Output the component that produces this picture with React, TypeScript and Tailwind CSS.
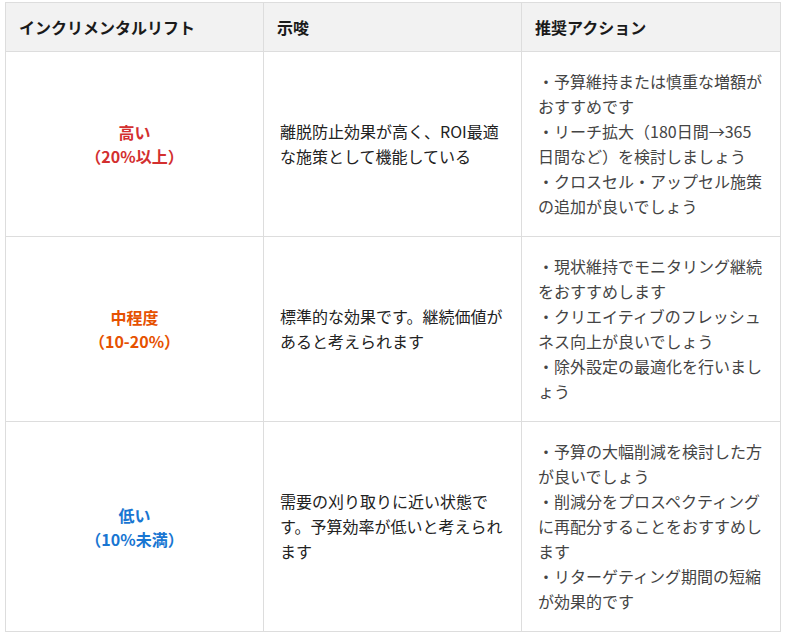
import React from 'react';

type Row = {
  level: string;
  range: string;
  color: string;
  meaning: string;
  actions: string[];
};

const rows: Row[] = [
  {
    level: '高い',
    range: '（20%以上）',
    color: 'text-[#d32f2f]',
    meaning: '離脱防止効果が高く、ROI最適な施策として機能している',
    actions: [
      '・予算維持または慎重な増額がおすすめです',
      '・リーチ拡大（180日間→365日間など）を検討しましょう',
      '・クロスセル・アップセル施策の追加が良いでしょう',
    ],
  },
  {
    level: '中程度',
    range: '（10-20%）',
    color: 'text-[#e65100]',
    meaning: '標準的な効果です。継続価値があると考えられます',
    actions: [
      '・現状維持でモニタリング継続をおすすめします',
      '・クリエイティブのフレッシュネス向上が良いでしょう',
      '・除外設定の最適化を行いましょう',
    ],
  },
  {
    level: '低い',
    range: '（10%未満）',
    color: 'text-[#1976d2]',
    meaning: '需要の刈り取りに近い状態です。予算効率が低いと考えられます',
    actions: [
      '・予算の大幅削減を検討した方が良いでしょう',
      '・削減分をプロスペクティングに再配分することをおすすめします',
      '・リターゲティング期間の短縮が効果的です',
    ],
  },
];

const App: React.FC = () => {
  return (
    <div className="min-h-[634px] bg-white pl-[5px] pt-[2px] font-['Noto_Sans_CJK_JP','Noto_Sans',sans-serif] text-[16px] leading-[25px]">
      <table className="w-[775px] table-fixed border-collapse">
        <colgroup>
          <col className="w-[258px]" />
          <col className="w-[258px]" />
          <col className="w-[259px]" />
        </colgroup>
        <thead>
          <tr className="bg-[#f2f2f2]">
            <th className="border border-[#dddddd] px-[13px] py-[11.5px] text-left font-bold text-[#1a1a1a]">インクリメンタルリフト</th>
            <th className="border border-[#dddddd] px-[13px] py-[11.5px] text-left font-bold text-[#1a1a1a]">示唆</th>
            <th className="border border-[#dddddd] px-[13px] py-[11.5px] text-left font-bold text-[#1a1a1a]">推奨アクション</th>
          </tr>
        </thead>
        <tbody>
          {rows.map((row) => (
            <tr key={row.level}>
              <td className={`border border-[#dddddd] px-[16px] py-[17px] text-center align-middle font-bold leading-[24px] ${row.color}`}>
                {row.level}
                <br />
                {row.range}
              </td>
              <td className="border border-[#dddddd] px-[16px] py-[17px] align-middle text-[#222222]">{row.meaning}</td>
              <td className="border border-[#dddddd] px-[16px] py-[17px] align-middle text-[#444444]">
                {row.actions.map((a, i) => (
                  <React.Fragment key={i}>
                    {i > 0 && <br />}
                    {a}
                  </React.Fragment>
                ))}
              </td>
            </tr>
          ))}
        </tbody>
      </table>
    </div>
  );
};

export default App;
